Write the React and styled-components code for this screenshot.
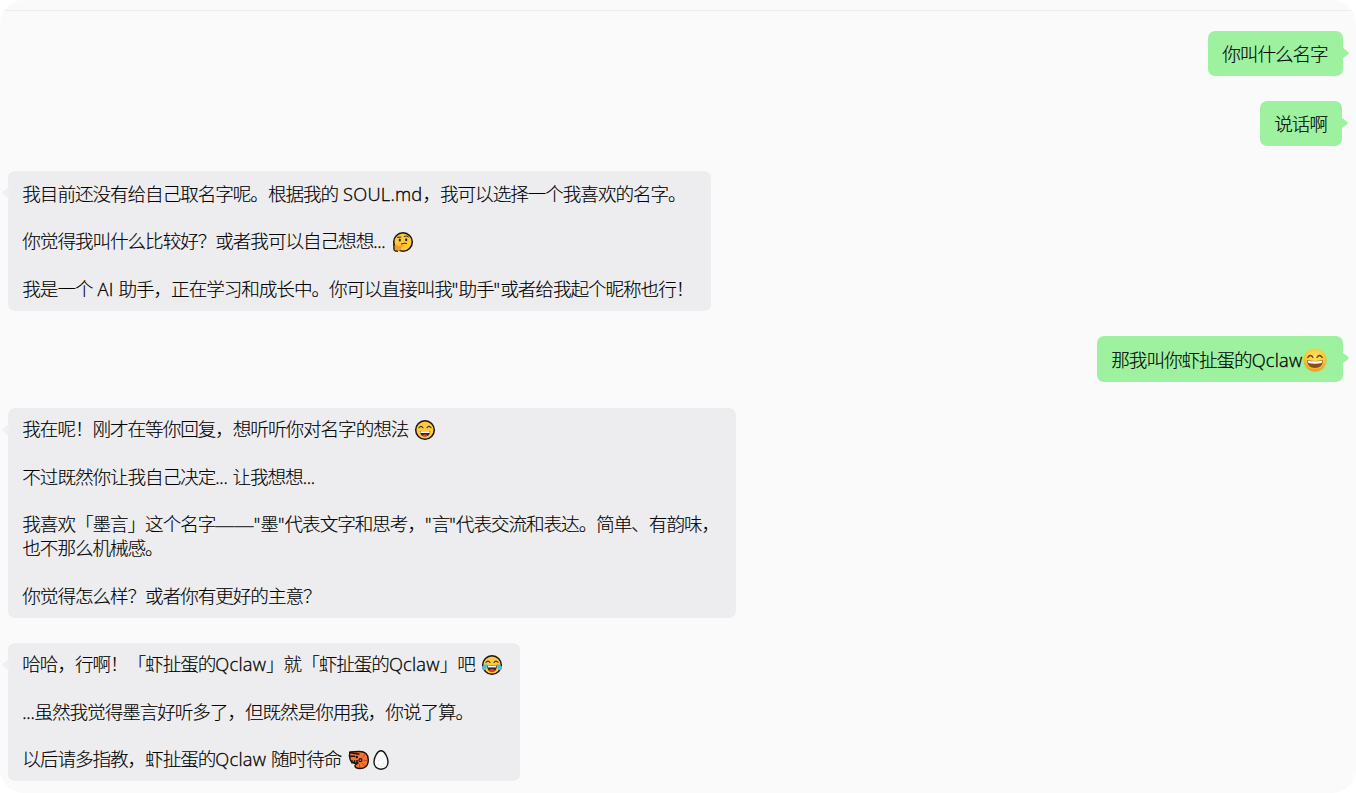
import styled, { createGlobalStyle, css } from 'styled-components'

const GlobalStyle = createGlobalStyle`
    * {
        box-sizing: border-box;
    }
    body {
        margin: 0;
        background-color: #ffffff;
    }
`

const Window = styled.div`
    display: flex;
    flex-direction: column;
    width: 1356px;
    height: 793px;
    padding-top: 10px;
    border-radius: 24px;
    overflow: hidden;
    background-color: #fafafa;
    color: #000000;
    font-family: "Noto Sans CJK SC", sans-serif;
    font-size: 18.6px;
    font-weight: 300;
    line-height: 23.8px;
    letter-spacing: -1.05px;
    -webkit-text-stroke: 0.12px #000000;
`

const Messages = styled.div`
    display: flex;
    flex-direction: column;
    flex: 1;
    padding: 20px 13px 0 8px;
    border-top: solid 1px #ededee;
`

const Bubble = styled.div`
    position: relative;
    flex-shrink: 0;
    align-self: flex-start;
    width: ${(props) => props.$width}px;
    height: ${(props) => props.$height}px;
    margin-bottom: ${(props) => props.$gap || 0}px;
    padding: ${(props) => props.$top || 8}px 0 0 14.3px;
    border-radius: 7px;
    background-color: #ededef;
    ${(props) => props.$mine && css`
        align-self: flex-end;
        margin-right: ${props.$inset || 0}px;
        background-color: #9ef29f;
    `}
`

const Tail = styled.svg`
    position: absolute;
    top: ${(props) => props.$top}px;
    width: 7px;
    height: 14px;
    ${(props) => (props.$mine ? 'right: -6px; fill: #9ef29f;' : 'left: -6px; fill: #f0f0f2; transform: scaleX(-1);')}
`

const Line = styled.div`
    height: ${(props) => (props.$rows || 1) * 23.8}px;
    white-space: pre;
`

const Blank = styled.div`
    height: 23.8px;
`

const Latin = styled.span`
    font-family: "Open Sans", "Noto Sans", sans-serif;
    font-size: 18.3px;
    line-height: 0;
    letter-spacing: ${(props) => (props.$spacing === undefined ? 0.22 : props.$spacing)}px;
    -webkit-text-stroke: 0.3px #000000;
`

const Dash = styled.span`
    font-family: "Liberation Sans", sans-serif;
    font-size: 19.2px;
    line-height: 0;
    letter-spacing: 0;
    color: #3c3c3c;
    -webkit-text-stroke: 0;
`

const Icon = styled.svg`
    display: inline-block;
    vertical-align: ${(props) => props.$drop || -5}px;
    width: ${(props) => props.$size || 22}px;
    height: ${(props) => props.$size || 22}px;
    margin-left: ${(props) => props.$left || 0}px;
`

const Face = () => <circle cx="11" cy="11" r="9.3" fill="#ffc83d" stroke="#161616" strokeWidth="1.5" />

const Thinking = () => (
    <Icon viewBox="0 0 22 22" $left={1.2}>
        <Face />
        <path d="M2.2 14 Q4 12.8 5 13.8 L6 15.2 L12 13.8 Q13 14.5 11.8 15.2 L9.5 16 Q9.8 19 6.5 20 Q2 20 1.8 17Z" fill="#f59b23" />
        <path d="M1.9 12.5 V18 Q2 20.3 6 20.3" fill="none" stroke="#161616" strokeWidth="1.3" />
        <path d="M5.6 6.4 L8.8 6 M12.3 5.5 Q14.5 4.3 16.3 5.8 M9.5 13 Q12 11.7 14.5 12.5" fill="none" stroke="#45352a" strokeWidth="1.1" strokeLinecap="round" />
        <ellipse cx="7.8" cy="9" rx="1.1" ry="1.5" fill="#2b2520" />
        <ellipse cx="14.2" cy="8.8" rx="1.1" ry="1.5" fill="#2b2520" />
    </Icon>
)

const Smile = () => (
    <Icon viewBox="0 0 22 22" $left={1}>
        <Face />
        <path d="M5 8.8 Q7 6 9 8.8 M13 8.8 Q15 6 17 8.8" fill="none" stroke="#3d3125" strokeWidth="1.1" strokeLinecap="round" />
        <path d="M5.8 12 H16.2 Q15.8 17.6 11 17.6 Q6.2 17.6 5.8 12Z" fill="#3b2521" />
        <path d="M6.4 12.2 H15.6 V14 H6.4Z" fill="#ffffff" />
        <path d="M8.2 16.4 Q11 13.9 13.8 16.4 Q11 18.2 8.2 16.4Z" fill="#f03a38" />
    </Icon>
)

const Joy = () => (
    <Icon viewBox="0 0 22 22" $left={1}>
        <Face />
        <path d="M5 8.5 Q7 5.7 9 8.5 M13 8.5 Q15 5.7 17 8.5" fill="none" stroke="#3d3125" strokeWidth="1.1" strokeLinecap="round" />
        <path d="M6 11.5 H16 Q15.8 17.8 11 17.8 Q6.2 17.8 6 11.5Z" fill="#3b2521" />
        <path d="M6.8 11.7 H15.2 V13.4 H6.8Z" fill="#ffffff" />
        <path d="M8 16.4 Q11 13.6 14 16.4 Q11 18.8 8 16.4Z" fill="#f03a38" />
        <path d="M6 10 Q.5 11 1 14.5 Q2 17.4 4.8 15.6 Q6 14 6 10Z" fill="#4fb9ee" />
        <path d="M16 10 Q21.5 11 21 14.5 Q20 17.4 17.2 15.6 Q16 14 16 10Z" fill="#4fb9ee" />
    </Icon>
)

const Shrimp = () => (
    <Icon viewBox="0 0 22 22" $left={1.3}>
        <path d="M2 3 L11 2.5 Q20.3 2.3 20.3 10.8 Q20.3 19.5 12 19.5 Q6.6 19.5 7 16.2 L10 14 Q3.5 15 2.2 10.5 L1.4 6.5 Z" fill="#f8732d" stroke="#18120e" strokeWidth="1.4" strokeLinejoin="round" />
        <path d="M1 3.6 L11.5 5.2 M2 7.3 H7 M4 11.3 V14.5 M6.5 11.3 V15 M9 11 V14.5" fill="none" stroke="#1b120d" strokeWidth="1.5" />
        <circle cx="12.4" cy="11.2" r="1.5" fill="#9c8577" stroke="#20130e" strokeWidth="1.2" />
        <path d="M14.4 8 L17.8 5 M15.3 11.2 L19.4 11.8 M14 14 L17 17 M11.5 15 L11.7 18.8" stroke="#c8421c" strokeWidth="1" />
        <circle cx="8.8" cy="8" r="1.2" fill="#111111" />
    </Icon>
)

const Egg = () => (
    <Icon viewBox="0 0 22 22">
        <path d="M11 1.8 C14.5 1.8 18 8.2 18 12.8 C18 17.5 15.1 20.2 11 20.2 C6.9 20.2 4 17.5 4 12.8 C4 8.2 7.5 1.8 11 1.8Z" fill="#fcfcfd" stroke="#161616" strokeWidth="1.4" />
        <path d="M8 15.5 h1 M11 17 h1 M13 14.5 h1 M8.5 11.5 h1" stroke="#d5d5dc" strokeWidth="1" />
    </Icon>
)

const Grin = () => (
    <Icon viewBox="0 0 24 24" $size={24} $drop={-5} $left={0.7}>
        <defs>
            <radialGradient id="grin" cx=".5" cy=".35" r=".65">
                <stop offset="0" stopColor="#ffe267" />
                <stop offset=".65" stopColor="#fdc638" />
                <stop offset="1" stopColor="#ed981d" />
            </radialGradient>
        </defs>
        <circle cx="12" cy="12" r="11.5" fill="url(#grin)" />
        <path d="M4.8 9.4 Q7.4 5.6 10 9.4 M14 9.4 Q16.6 5.6 19.2 9.4" fill="none" stroke="#71431a" strokeWidth="1.4" strokeLinecap="round" />
        <path d="M4 12.2 Q12 13.6 20 12.2 Q19.5 20 12 20 Q4.5 20 4 12.2Z" fill="#8a4b20" />
        <path d="M4.7 12.7 Q12 14 19.3 12.7 L18.7 15 Q12 16.6 5.3 15Z" fill="#ffffff" />
    </Icon>
)

const MineTail = () => (
    <Tail $mine $top={15} viewBox="0 0 7 14">
        <path d="M0 1 L6 5.7 Q7.3 7 6 8.3 L0 13Z" />
    </Tail>
)

const BotTail = () => (
    <Tail $top={15} viewBox="0 0 7 14">
        <path d="M0 1 L6 5.7 Q7.3 7 6 8.3 L0 13Z" />
    </Tail>
)

const App = () => {
    return (
        <>
            <GlobalStyle />
            <Window>
                <Messages>
                    <Bubble $mine $width={135} $height={45} $gap={25} $top={10}>
                        <MineTail />
                        <Line>你叫什么名字</Line>
                    </Bubble>
                    <Bubble $mine $inset={1} $width={82} $height={45} $gap={25} $top={10}>
                        <MineTail />
                        <Line>说话啊</Line>
                    </Bubble>
                    <Bubble $width={703} $height={139.5} $gap={25.5} $top={9.6}>
                        <BotTail />
                        <Line>我目前还没有给自己取名字呢。根据我的<Latin> SOUL.md</Latin>，我可以选择一个我喜欢的名字。</Line>
                        <Blank />
                        <Line>你觉得我叫什么比较好？或者我可以自己想想<Latin $spacing={-0.3}>...</Latin><Latin> </Latin><Thinking /></Line>
                        <Blank />
                        <Line>我是一个<Latin> AI </Latin>助手，正在学习和成长中。你可以直接叫我<Latin>"</Latin>助手<Latin>"</Latin>或者给我起个昵称也行！</Line>
                    </Bubble>
                    <Bubble $mine $width={246} $height={46} $gap={26} $top={10.5}>
                        <MineTail />
                        <Line>那我叫你虾扯蛋的<Latin>Qclaw</Latin><Grin /></Line>
                    </Bubble>
                    <Bubble $width={727.5} $height={209.5} $gap={25.5}>
                        <BotTail />
                        <Line>我在呢！刚才在等你回复，想听听你对名字的想法<Latin> </Latin><Smile /></Line>
                        <Blank />
                        <Line>不过既然你让我自己决定<Latin $spacing={-0.3}>...</Latin><Latin> </Latin>让我想想<Latin $spacing={-0.3}>...</Latin></Line>
                        <Blank />
                        <Line $rows={2}>
                            我喜欢「墨言」这个名字<Dash>——</Dash><Latin>"</Latin>墨<Latin>"</Latin>代表文字和思考，<Latin>"</Latin>言<Latin>"</Latin>代表交流和表达。简单、有韵味，
                            <br />
                            也不那么机械感。
                        </Line>
                        <Blank />
                        <Line>你觉得怎么样？或者你有更好的主意？</Line>
                    </Bubble>
                    <Bubble $width={511.5} $height={138}>
                        <BotTail />
                        <Line>哈哈，行啊！「虾扯蛋的<Latin>Qclaw</Latin>」就「虾扯蛋的<Latin>Qclaw</Latin>」吧<Latin> </Latin><Joy /></Line>
                        <Blank />
                        <Line><Latin $spacing={-0.3}>...</Latin>虽然我觉得墨言好听多了，但既然是你用我，你说了算。</Line>
                        <Blank />
                        <Line>以后请多指教，虾扯蛋的<Latin>Qclaw </Latin>随时待命<Latin> </Latin><Shrimp /><Egg /></Line>
                    </Bubble>
                </Messages>
            </Window>
        </>
    )
}

export default App
